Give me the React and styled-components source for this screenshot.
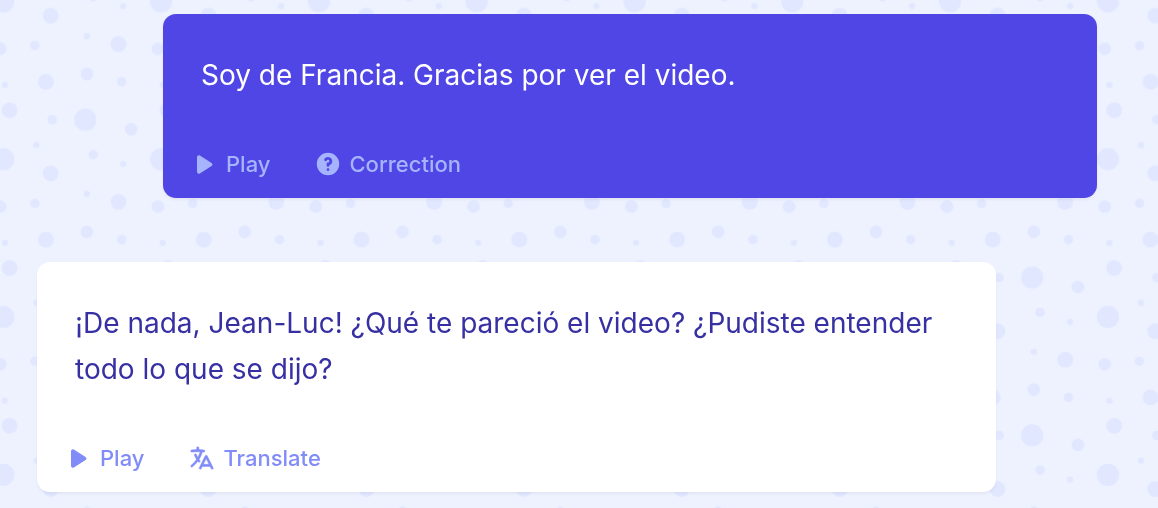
import styled, { createGlobalStyle } from "styled-components";
import { HiQuestionMarkCircle } from "react-icons/hi";
import { HiMiniLanguage, HiMiniPlay } from "react-icons/hi2";

const GlobalStyle = createGlobalStyle`
  *, *::before, *::after {
    box-sizing: border-box;
  }
  body {
    margin: 0;
    background: #eef2ff;
    font-family: "Inter", "Liberation Sans", sans-serif;
  }
`;

const Pattern = styled.svg`
  position: fixed;
  inset: 0;
  z-index: -1;
  width: 100%;
  height: 100%;
  fill: #e0e7ff;
`;

const Chat = styled.main`
  display: flex;
  flex-direction: column;
  gap: 64px;
  padding: 14px 61px 16px 37px;
`;

const Bubble = styled.article`
  display: flex;
  flex-direction: column;
  gap: 47px;
  padding: 38px 38px 15px;
  border-radius: 13px;
  box-shadow: 0 2px 3px rgba(0, 0, 0, 0.05);
  color: ${({ $mine }) => ($mine ? "#ffffff" : "#3730a3")};
  background: ${({ $mine }) => ($mine ? "#4f46e5" : "#ffffff")};
  margin-left: ${({ $mine }) => ($mine ? "126px" : "0")};
  margin-right: ${({ $mine }) => ($mine ? "0" : "101px")};
`;

const Message = styled.p`
  margin: 0;
  font-size: 28px;
  line-height: 46px;
`;

const Actions = styled.div`
  display: flex;
  gap: 44px;
  margin-left: -9px;
`;

const Action = styled.button`
  display: flex;
  align-items: center;
  gap: 7px;
  padding: 0;
  border: none;
  background: none;
  color: ${({ $mine }) => ($mine ? "#a5b4fc" : "#818cf8")};
  font-family: inherit;
  font-size: 22px;
  font-weight: 500;
  line-height: 38px;
  cursor: pointer;
`;

const PlayIcon = styled(HiMiniPlay)`
  width: 25px;
  height: 25px;
  margin-right: 2px;
`;

const TranslateIcon = styled(HiMiniLanguage)`
  width: 28px;
  height: 28px;

  path {
    stroke: currentColor;
    stroke-width: 0.4;
  }
`;

// x, y, radius inside a 100 x 100 tile
const dots = [
  [11, 11, 7],
  [59, 36, 7],
  [16, 33, 3],
  [79, 64, 3],
  [34, 87, 3],
  [90, 11, 3],
  [12, 82, 4],
  [40, 17, 4],
  [57, 66, 4],
  [63, 5, 5],
  [86, 87, 5],
  [32, 63, 5],
  [89, 45, 5],
  [80, 27, 2],
  [60, 89, 2],
  [35, 39, 2],
  [12, 58, 2],
];

const Dots = () => {
  return (
    <Pattern aria-hidden="true">
      <defs>
        <pattern
          id="dots"
          width="100"
          height="100"
          patternUnits="userSpaceOnUse"
          patternTransform="translate(68 102.4) scale(1.578)"
        >
          {dots.map(([x, y, r]) => (
            <circle key={`${x}-${y}`} cx={x} cy={y} r={r} />
          ))}
        </pattern>
      </defs>
      <rect width="100%" height="100%" fill="url(#dots)" />
    </Pattern>
  );
};

const App = () => {
  return (
    <>
      <GlobalStyle />
      <Dots />
      <Chat>
        <Bubble $mine>
          <Message>Soy de Francia. Gracias por ver el video.</Message>
          <Actions>
            <Action $mine type="button">
              <PlayIcon />
              Play
            </Action>
            <Action $mine type="button">
              <HiQuestionMarkCircle size={28} />
              Correction
            </Action>
          </Actions>
        </Bubble>
        <Bubble>
          <Message>
            ¡De nada, Jean-Luc! ¿Qué te pareció el video? ¿Pudiste entender todo
            lo que se dijo?
          </Message>
          <Actions>
            <Action type="button">
              <PlayIcon />
              Play
            </Action>
            <Action type="button">
              <TranslateIcon />
              Translate
            </Action>
          </Actions>
        </Bubble>
      </Chat>
    </>
  );
};

export default App;
